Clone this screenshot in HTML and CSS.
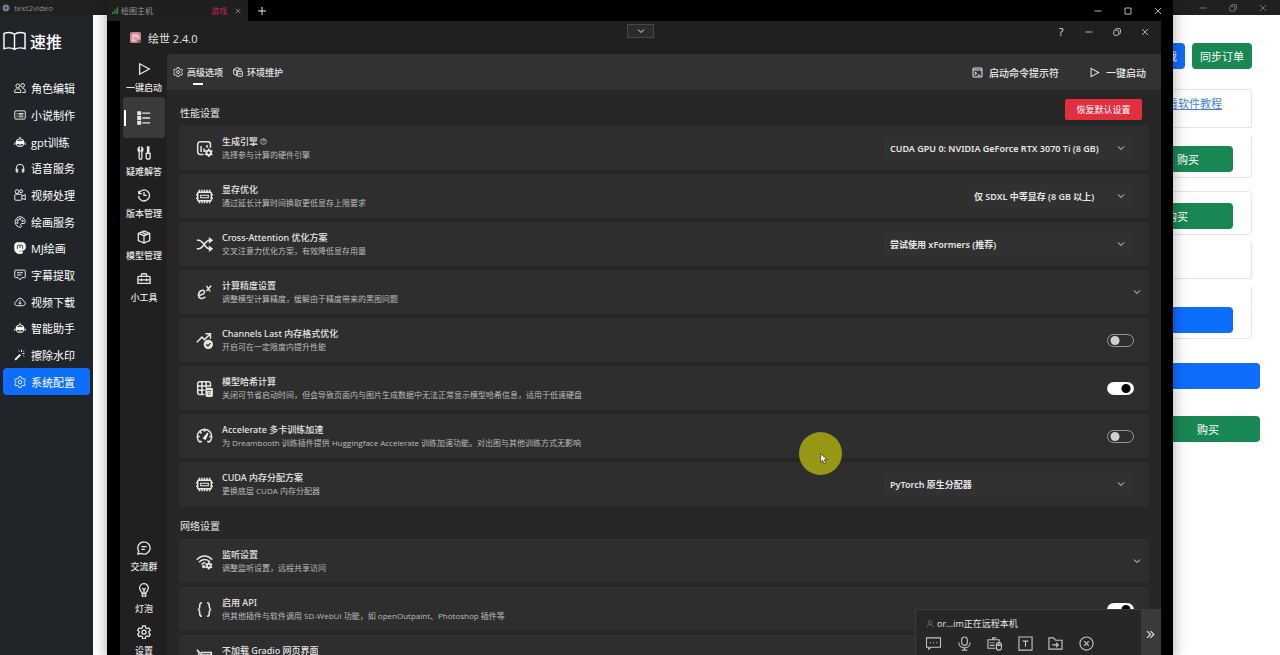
FILE: index.html
```
<!DOCTYPE html>
<html lang="zh-CN">
<head>
    <meta charset="UTF-8">
    <meta name="viewport" content="width=device-width, initial-scale=1.0">
    <title>text2video</title>
    <link rel="stylesheet" href="styles.css">
</head>
<body>
    <!-- Icons used more than once or kept out of the markup -->
    <svg class="sprite" aria-hidden="true">
        <symbol id="i-chevron" viewBox="0 0 16 16"><path d="M2 5l6 6 6-6"/></symbol>
        <symbol id="i-close" viewBox="0 0 16 16"><path d="M2 2l12 12M14 2L2 14"/></symbol>
        <symbol id="i-min" viewBox="0 0 16 16"><path d="M1 8h14"/></symbol>
        <symbol id="i-max" viewBox="0 0 16 16"><path d="M2 2h12v12H2z"/></symbol>
        <symbol id="i-restore" viewBox="0 0 16 16"><rect x="1.500" y="4.500" width="10" height="10" rx="2"/><path d="M5 4V3a2 2 0 0 1 2-2h5a3 3 0 0 1 3 3v5a2 2 0 0 1-2 2h-1"/></symbol>
        <symbol id="i-play" viewBox="0 0 16 16"><path d="M3 2v12l11-6z"/></symbol>
        <symbol id="i-chip" viewBox="0 0 20 20"><rect x="2" y="5" width="16" height="10" rx="1"/><path d="M5.500 8.500h9v3h-9z" stroke-width="1.200"/><path d="M4 2v3M7 2v3M10 2v3M13 2v3M16 2v3M4 15v3M7 15v3M10 15v3M13 15v3M16 15v3M0 8h2M0 12h2M18 8h2M18 12h2"/></symbol>
        <symbol id="i-robot" viewBox="0 0 16 16"><path d="M8 1v3M1 9v3M15 9v3"/><rect x="3" y="4" width="10" height="10" rx="4"/><path d="M3 7h10v3H3z" fill="currentColor"/><path d="M6 12h4"/></symbol>
        <symbol id="i-gear" viewBox="0 0 16 16"><path d="M6.500 1h3l.5 2.200 1.600.9 2.100-.7 1.500 2.600-1.600 1.500v1.500l1.600 1.500-1.500 2.600-2.100-.7-1.600.9-.5 2.200h-3L6 13.300l-1.600-.9-2.100.7L.8 10.500 2.400 9V7.500L.8 6l1.500-2.600 2.100.7L6 3.200z"/><circle cx="8" cy="8.200" r="2.300"/></symbol>
    </svg>

    <div class="desktop">
        <header class="titlebar">
            <svg class="icon" viewBox="0 0 16 16"><ellipse cx="8" cy="8" rx="7" ry="3"/><ellipse cx="8" cy="8" rx="7" ry="3" transform="rotate(60 8 8)"/><ellipse cx="8" cy="8" rx="7" ry="3" transform="rotate(120 8 8)"/></svg>
            <span class="titlebar-name">text2video</span>
            <button class="win-btn" aria-label="最小化"><svg class="icon"><use href="#i-min"/></svg></button>
            <button class="win-btn" aria-label="还原"><svg class="icon"><use href="#i-restore"/></svg></button>
            <button class="win-btn" aria-label="关闭"><svg class="icon"><use href="#i-close"/></svg></button>
        </header>

        <div class="page">
            <aside class="sidebar">
                <div class="brand">
                    <svg class="icon" viewBox="0 0 24 20"><path d="M12 3C9 .8 5 .8 1 2v16c4-1.200 8-1.200 11 .8 3-2 7-2 11-.8V2C19 .8 15 .8 12 3zM12 3v15.500"/></svg>
                    <span>速推</span>
                </div>
                <nav class="menu">
                    <a href="#"><svg class="icon" viewBox="0 0 16 16"><circle cx="5" cy="5" r="2.500"/><circle cx="11.500" cy="4.500" r="2.500"/><path d="M1 14v-2c0-2 1.500-3 4-3s4 1 4 3v2zM11 14h4v-2c0-2-1.500-3.500-4-3.500"/></svg>角色编辑</a>
                    <a href="#"><svg class="icon" viewBox="0 0 16 16"><rect x="1" y="2.500" width="14" height="11" rx="1.500"/><path d="M3.500 6h1M6 6h6.500M3.500 8h1M6 8h6.500M3.500 10.500h1M6 10.500h6.500"/></svg>小说制作</a>
                    <a href="#"><svg class="icon"><use href="#i-robot"/></svg>gpt训练</a>
                    <a href="#"><svg class="icon" viewBox="0 0 16 16"><path d="M3 12V8a5 5 0 0 1 10 0v4"/><path d="M3 9.500h2v4H3zM11 9.500h2v4h-2z"/></svg>语音服务</a>
                    <a href="#"><svg class="icon" viewBox="0 0 16 16"><circle cx="4" cy="3.500" r="2.500"/><circle cx="9.500" cy="3" r="2"/><rect x="1" y="7" width="9.500" height="8" rx="1.500"/><path d="M10.500 9.500L15 7.500v7l-4.500-2"/></svg>视频处理</a>
                    <a href="#"><svg class="icon" viewBox="0 0 16 16"><path d="M8 1a7 7 0 1 0 1 14c1.500-.5.500-2 0-3s0-2 1.500-2H13c2 0 2-2 2-2.500C14.500 3.500 11.500 1 8 1z"/><circle cx="5" cy="5.500" r="1"/><circle cx="8.500" cy="4" r="1"/><circle cx="4.500" cy="9" r="1"/><circle cx="11.500" cy="6.500" r="1"/></svg>绘画服务</a>
                    <a href="#"><svg class="icon" viewBox="0 0 16 16"><path d="M4 1h8c2 0 3 1.500 3 3.500V8c0 2-1.500 3-3.500 3H6c0 1.500 2 2.500 5 1.700V15C5 16 1 14.500 1 9V4.500C1 2.500 2 1 4 1z" fill="currentColor"/><path d="M4.500 9V5.500c0-2 3.500-2 3.500 0V8M8 5.500c0-2 3.500-2 3.500 0V9" stroke="#212529"/></svg>MJ绘画</a>
                    <a href="#"><svg class="icon" viewBox="0 0 16 16"><path d="M2 1.500h12a1 1 0 0 1 1 1v8a1 1 0 0 1-1 1h-3.500L8 14.500l-2.500-3H2a1 1 0 0 1-1-1v-8a1 1 0 0 1 1-1zM4 5h8M4 8h6"/></svg>字幕提取</a>
                    <a href="#"><svg class="icon" viewBox="0 0 16 16"><path d="M4.500 13C2.500 13 1 11.700 1 10c0-1.500 1-2.500 2.500-3C4 4.500 6 3 8 3s4 1.500 4.500 3.500C14 7 15 8 15 9.700S13.500 13 12 13zM8 6v5M6 9l2 2 2-2"/></svg>视频下载</a>
                    <a href="#"><svg class="icon"><use href="#i-robot"/></svg>智能助手</a>
                    <a href="#"><svg class="icon" viewBox="0 0 16 16"><path d="M1.500 14.500l7-7" stroke-width="2.500"/><path d="M10 1v3M14 6h-3M6 2l1.500 1.500M13.500 2L12 3.500M13.500 10L12 8.500"/></svg>擦除水印</a>
                    <a href="#" class="active"><svg class="icon"><use href="#i-gear"/></svg>系统配置</a>
                </nav>
            </aside>

            <main class="orders">
                <div class="orders-top">
                    <button class="btn btn-blue">在线下载</button>
                    <button class="btn btn-green">同步订单</button>
                </div>
                <div class="box box-link"><a href="#">查看软件教程</a></div>
                <div class="box box-open"><button class="btn btn-green">购买</button></div>
                <div class="box box-gap"><button class="btn btn-green btn-wide">购买</button></div>
                <div class="box box-open box-short"></div>
                <div class="box box-open box-tall"><button class="btn btn-blue btn-wide" aria-label="保存"></button></div>
                <button class="btn btn-blue btn-bar" aria-label="提交"></button>
                <button class="btn btn-green btn-last">购买</button>
            </main>
        </div>
    </div>

    <div class="remote">
        <div class="remote-bar">
            <div class="remote-tab">
                <svg class="signal" viewBox="0 0 8 8"><path d="M0 6h1v2H0zM2 4h1v4H2zM4 2h1v6H4zM6 0h1v8H6z"/></svg>
                <span>绘图主机</span>
                <span class="tag">游戏</span>
                <button class="tab-close" aria-label="关闭标签"><svg class="icon"><use href="#i-close"/></svg></button>
            </div>
            <button class="tab-add" aria-label="新建"><svg class="icon" viewBox="0 0 16 16"><path d="M8 0v16M0 8h16"/></svg></button>
            <div class="remote-controls">
                <button class="win-btn" aria-label="最小化"><svg class="icon"><use href="#i-min"/></svg></button>
                <button class="win-btn" aria-label="最大化"><svg class="icon"><use href="#i-max"/></svg></button>
                <button class="win-btn" aria-label="关闭"><svg class="icon"><use href="#i-close"/></svg></button>
            </div>
        </div>

        <div class="app">
            <header class="app-title">
                <svg class="avatar" viewBox="0 0 12 12"><rect width="12" height="12" rx="2" fill="#c9848f"/><path d="M2 10V5c0-4 7-4 8 0v3H8l-2 2z" fill="#e9c3c6"/><path d="M4 6h4v2H4z" fill="#c9848f"/><path d="M9 9h3v3H8z" fill="#7d5b60"/></svg>
                <h1>绘世 2.4.0</h1>
                <div class="app-controls">
                    <button class="help" aria-label="帮助">?</button>
                    <button class="win-btn" aria-label="最小化"><svg class="icon"><use href="#i-min"/></svg></button>
                    <button class="win-btn" aria-label="还原"><svg class="icon"><use href="#i-restore"/></svg></button>
                    <button class="win-btn" aria-label="关闭"><svg class="icon"><use href="#i-close"/></svg></button>
                </div>
            </header>

            <div class="app-body">
                <nav class="rail">
                    <a href="#"><svg class="icon"><use href="#i-play"/></svg>一键启动</a>
                    <a href="#" class="active" aria-label="高级选项"><svg class="icon" viewBox="0 0 16 16"><path d="M1 1h3v3H1zM1 6.500h3v3H1zM1 12h3v3H1z" fill="currentColor"/><path d="M6 2.500h9M6 8h9M6 13.500h9"/></svg></a>
                    <a href="#"><svg class="icon" viewBox="0 0 16 16"><path d="M2.500 1.500v4h3v-4C7 2.500 7.500 5 5.500 7v7c0 1.500-3 1.500-3 0V7C.500 5 1 2.500 2.500 1.500zM12 1h1.500v6H12zM10.500 8.500h4.500V13c0 2.500-4.500 2.500-4.500 0z"/></svg>疑难解答</a>
                    <a href="#"><svg class="icon" viewBox="0 0 16 16"><path d="M2 3v3.500h3.500M2.200 6A6.300 6.300 0 1 1 1.700 9M8 4.500V8.500h3"/></svg>版本管理</a>
                    <a href="#"><svg class="icon" viewBox="0 0 16 16"><path d="M8 1l6.500 2.800v8.400L8 15l-6.500-2.800V3.800zM1.500 3.800L8 6.500l6.500-2.700M8 6.500V15M5 2.500l6.500 2.700"/></svg>模型管理</a>
                    <a href="#"><svg class="icon" viewBox="0 0 16 16"><path d="M5 5V3a1 1 0 0 1 1-1h4a1 1 0 0 1 1 1v2M2 5h12a1 1 0 0 1 1 1v7H1V6a1 1 0 0 1 1-1zM1 9h14M5 7.500v3M11 7.500v3"/></svg>小工具</a>
                    <a href="#" class="rail-end"><svg class="icon" viewBox="0 0 16 16"><path d="M8 1a7 7 0 1 1-3.300 13.200L1 15l.9-3.500A7 7 0 0 1 8 1zM5 6.500h6M5 9.500h4"/></svg>交流群</a>
                    <a href="#"><svg class="icon" viewBox="0 0 16 16"><path d="M6 12C6 10 3 9 3 5.800a5 5 0 0 1 10 0C13 9 10 10 10 12zM6 12v3h4v-3M8 12V7M6 6l2 1.500L10 6"/></svg>灯泡</a>
                    <a href="#"><svg class="icon"><use href="#i-gear"/></svg>设置</a>
                </nav>

                <main class="content">
                    <div class="toolbar">
                        <button class="tab active"><svg class="icon"><use href="#i-gear"/></svg>高级选项</button>
                        <button class="tab"><svg class="icon" viewBox="0 0 16 16"><path d="M1 4l5-3 7 2v3M1 4l5 2v8l-5-3zM6 6l5-2"/><rect x="7" y="7" width="8" height="8" rx="1"/><path d="M9 11h4"/></svg>环境维护</button>
                        <button class="action action-first"><svg class="icon" viewBox="0 0 16 16"><rect x="1.500" y="1.500" width="13" height="13" rx="1.500"/><path d="M1.500 4.500h13M4 7l2.500 2L4 11.500M8 12h4"/></svg>启动命令提示符</button>
                        <button class="action"><svg class="icon"><use href="#i-play"/></svg>一键启动</button>
                    </div>

                    <section class="settings">
                        <div class="section-head">
                            <h2>性能设置</h2>
                            <button class="reset">恢复默认设置</button>
                        </div>

                        <div class="row">
                            <svg class="icon" viewBox="0 0 20 20"><path d="M9 17H5a3 3 0 0 1-3-3V5a3 3 0 0 1 3-3h9a3 3 0 0 1 3 3v4M6 7v7M9.500 10v4M13 6v3"/><path d="M15 10v10M10.700 12.500l8.600 5M10.700 17.500l8.600-5"/><circle cx="15" cy="15" r="3" fill="currentColor"/><circle cx="15" cy="15" r="1.500" fill="#2e2e2e" stroke="none"/></svg>
                            <label for="engine"><b>生成引擎 <svg class="icon hint" viewBox="0 0 16 16"><circle cx="8" cy="8" r="6.500"/><path d="M6 6c0-3 4-3 4 0 0 1.500-2 1.500-2 3M8 11v1"/></svg></b><small>选择参与计算的硬件引擎</small></label>
                            <div class="select"><select id="engine"><option>CUDA GPU 0: NVIDIA GeForce RTX 3070 Ti (8 GB)</option></select><svg class="icon"><use href="#i-chevron"/></svg></div>
                        </div>
                        <div class="row">
                            <svg class="icon"><use href="#i-chip"/></svg>
                            <label for="vram"><b>显存优化</b><small>通过延长计算时间换取更低显存上限要求</small></label>
                            <div class="select select-narrow"><select id="vram"><option>仅 SDXL 中等显存 (8 GB 以上)</option></select><svg class="icon"><use href="#i-chevron"/></svg></div>
                        </div>
                        <div class="row">
                            <svg class="icon" viewBox="0 0 20 20"><path d="M1 5h2c6 0 7 10 13 10h2M1 15h2c6 0 7-10 13-10h2"/><path d="M16 3l3 2-3 2zM16 13l3 2-3 2z" fill="currentColor"/></svg>
                            <label for="attention"><b>Cross-Attention 优化方案</b><small>交叉注意力优化方案，有效降低显存用量</small></label>
                            <div class="select"><select id="attention"><option>尝试使用 xFormers (推荐)</option></select><svg class="icon"><use href="#i-chevron"/></svg></div>
                        </div>
                        <button class="row row-expand">
                            <svg class="icon" viewBox="0 0 20 20"><path d="M2 13c4 0 8-1 8-4 0-3-7-2-7 4 0 5 5 5 8 2M12 3c2-1 3 6 5 5M18 2c-2 1-4 6-6 6"/></svg>
                            <span class="text"><b>计算精度设置</b><small>调整模型计算精度，缓解由于精度带来的黑图问题</small></span>
                            <svg class="icon arrow"><use href="#i-chevron"/></svg>
                        </button>
                        <div class="row">
                            <svg class="icon" viewBox="0 0 20 20"><path d="M1 12l6-6 3 3 6-6M11 2h6v6"/><circle cx="14.500" cy="14.500" r="5.500" fill="currentColor" stroke="none"/><path d="M12 14.500l2 2 3-3.500" stroke="#2e2e2e" stroke-width="1.500"/></svg>
                            <label for="channels"><b>Channels Last 内存格式优化</b><small>开启可在一定限度内提升性能</small></label>
                            <input type="checkbox" class="switch" id="channels">
                        </div>
                        <div class="row">
                            <svg class="icon" viewBox="0 0 20 20"><path d="M10 17H4a2 2 0 0 1-2-2V4a2 2 0 0 1 2-2h11a2 2 0 0 1 2 2v4M2 7h15M2 12h8M7 2v15M12 2v7"/><rect x="12" y="10" width="7" height="9" rx="1" fill="currentColor"/><path d="M13 12.500h5M14 15h1M16 15h1M14 17h1M16 17h1" stroke="#2e2e2e" stroke-width="1"/></svg>
                            <label for="hash"><b>模型哈希计算</b><small>关闭可节省启动时间，但会导致页面内与图片生成数据中无法正常显示模型哈希信息，适用于低速硬盘</small></label>
                            <input type="checkbox" class="switch" id="hash" checked>
                        </div>
                        <div class="row">
                            <svg class="icon" viewBox="0 0 20 20"><path d="M5 17a8.500 8.500 0 1 1 10 0M2 10h2.500M5 4.500l1.500 2M10 2v2.500M18 10h-2.500M5 17l1.500-2M15 17l-1.500-2"/><path d="M9 12l5-6-3 7z" fill="currentColor"/></svg>
                            <label for="accelerate"><b>Accelerate 多卡训练加速</b><small>为 Dreambooth 训练插件提供 Huggingface Accelerate 训练加速功能。对出图与其他训练方式无影响</small></label>
                            <input type="checkbox" class="switch" id="accelerate">
                        </div>
                        <div class="row">
                            <svg class="icon"><use href="#i-chip"/></svg>
                            <label for="alloc"><b>CUDA 内存分配方案</b><small>更换底层 CUDA 内存分配器</small></label>
                            <div class="select"><select id="alloc"><option>PyTorch 原生分配器</option></select><svg class="icon"><use href="#i-chevron"/></svg></div>
                        </div>

                        <div class="section-head section-next">
                            <h2>网络设置</h2>
                        </div>
                        <button class="row row-expand">
                            <svg class="icon" viewBox="0 0 20 20"><path d="M1 8c5-6 13-6 18 0M3.500 11c4-4.500 9-4.500 13-.5M6.500 13.500c2-2 3-2.500 4.500-2"/><circle cx="9" cy="16" r="1" fill="currentColor"/><path d="M15 10.500v9M11 12.700l8 4.600M11 17.300l8-4.600"/><circle cx="15" cy="15" r="2.500" fill="currentColor"/><circle cx="15" cy="15" r="1.300" fill="#2e2e2e" stroke="none"/></svg>
                            <span class="text"><b>监听设置</b><small>调整监听设置，远程共享访问</small></span>
                            <svg class="icon arrow"><use href="#i-chevron"/></svg>
                        </button>
                        <div class="row">
                            <svg class="icon" viewBox="0 0 20 20"><path d="M7 2C3 2 5 6 4 8.500 3.500 9.500 3 10 2 10c1 0 1.500.5 2 1.500C5 14 3 18 7 18M13 2c4 0 2 4 3 6.500.5 1 1 1.500 2 1.500-1 0-1.500.5-2 1.500-1 2.500 1 6.500-3 6.500"/></svg>
                            <label for="api"><b>启用 API</b><small>供其他插件与软件调用 SD-WebUI 功能，如 openOutpaint、Photoshop 插件等</small></label>
                            <input type="checkbox" class="switch" id="api" checked>
                        </div>
                        <div class="row">
                            <svg class="icon" viewBox="0 0 20 20"><path d="M1 1l17 17M6 4h12v12M3 5v11h12M8 7h10"/></svg>
                            <label for="gradio"><b>不加载 Gradio 网页界面</b><small></small></label>
                            <input type="checkbox" class="switch" id="gradio">
                        </div>
                    </section>
                </main>
            </div>
        </div>

        <button class="handle" aria-label="展开工具栏"><svg class="icon"><use href="#i-chevron"/></svg></button>

        <div class="session">
            <div class="session-main">
                <div class="session-user"><svg class="icon" viewBox="0 0 16 16"><circle cx="8" cy="5" r="3.500"/><path d="M2 15c0-8 12-8 12 0"/></svg>or...im正在远程本机</div>
                <div class="session-tools">
                    <button aria-label="聊天"><svg class="icon" viewBox="0 0 16 16"><path d="M.5 2h15v10H5l-2 2v-2H.5zM4 7h1M7.500 7h1M11 7h1"/></svg></button>
                    <button aria-label="语音"><svg class="icon" viewBox="0 0 16 16"><rect x="5" y="1" width="6" height="9" rx="3"/><path d="M2 7c0 7.500 12 7.500 12 0M8 12.500V15M5 15h6"/></svg></button>
                    <button aria-label="键鼠"><svg class="icon" viewBox="0 0 16 16"><path d="M9 13H1V4h12v2M6 4V2h4M3 7h1M5 7h1M7 7h1M3 10h5"/><rect x="10" y="7" width="5.500" height="8" rx="2.500"/><path d="M10 10h5M12.700 7v3"/></svg></button>
                    <button aria-label="文本"><svg class="icon" viewBox="0 0 16 16"><path d="M1 1h14v14H1zM5 5.500h6M8 5.500V11.500"/></svg></button>
                    <button aria-label="传输文件"><svg class="icon" viewBox="0 0 16 16"><path d="M1 2h5l2 2.500h7V14H1zM4.500 9.500H11M8.500 7l2.500 2.500L8.500 12"/></svg></button>
                    <button aria-label="断开"><svg class="icon" viewBox="0 0 16 16"><circle cx="8" cy="8" r="7"/><path d="M5.500 5.500l5 5M10.500 5.500l-5 5"/></svg></button>
                </div>
            </div>
            <button class="session-fold" aria-label="收起"><svg class="icon" viewBox="0 0 16 16"><path d="M2 2l6 6-6 6M8 2l6 6-6 6"/></svg></button>
        </div>
    </div>

    <div class="pointer">
        <svg viewBox="0 0 12 18"><path d="M1 1v13l3-3 2 5 2.500-1-2-5H11z"/></svg>
    </div>
</body>
</html>
```
FILE: styles.css
```
* {
    box-sizing: border-box;
}
body {
    margin: 0;
    height: 100vh;
    overflow: hidden;
    position: relative;
    font-family: "Open Sans", "Noto Sans CJK SC", sans-serif;
    font-size: 11px;
    background-color: #fff;
}
button, select {
    font-family: inherit;
    color: inherit;
    background: none;
    border: none;
    margin: 0;
    padding: 0;
}
a {
    color: inherit;
    text-decoration: none;
}
.sprite {
    display: none;
}
.icon {
    width: 12px;
    height: 12px;
    flex: none;
    fill: none;
    stroke: currentColor;
    stroke-width: 1.5;
}
.win-btn {
    display: flex;
    align-items: center;
    justify-content: center;
    width: 30px;
    height: 14px;
}
.win-btn .icon {
    width: 8px;
    height: 8px;
}

/* Back window */
.desktop {
    height: 100%;
    display: flex;
    flex-direction: column;
}
.titlebar {
    height: 15px;
    flex: none;
    display: flex;
    align-items: center;
    padding: 0 2px;
    background-color: #202020;
    color: #8c8c8c;
    font-size: 8px;
}
.titlebar .icon {
    width: 8px;
    height: 8px;
}
.titlebar > .icon {
    color: #8fa3b0;
}
.titlebar-name {
    flex: 1;
    padding-left: 4px;
}
.page {
    flex: 1;
    display: flex;
}
.sidebar {
    width: 93px;
    padding: 13px 3px 0;
    background-color: #212529;
    color: #fff;
}
.brand {
    display: flex;
    align-items: center;
    gap: 4px;
    height: 26px;
    font-size: 16px;
    font-weight: 500;
}
.brand .icon {
    width: 23px;
    height: 20px;
}
.menu {
    display: flex;
    flex-direction: column;
    height: 320px;
    margin-top: 21px;
}
.menu a {
    flex: 1;
    display: flex;
    align-items: center;
    gap: 5px;
    padding-left: 11px;
    border-radius: 4px;
}
.menu a.active {
    background-color: #0d6efd;
}
.menu .icon {
    stroke-width: 1.2;
}
.orders {
    flex: 1;
    display: flex;
    flex-direction: column;
    align-items: flex-end;
    padding: 28px 28px 0;
}
.orders-top {
    display: flex;
    gap: 7px;
    margin-bottom: 20px;
}
.btn {
    height: 26px;
    min-width: 60px;
    padding: 0 8px;
    border-radius: 4px;
    color: #fff;
    font-size: 11px;
}
.btn-blue {
    background-color: #0d6efd;
}
.btn-green {
    background-color: #198754;
}
.box {
    width: 50%;
    height: 44px;
    padding: 6px 18px 0 0;
    display: flex;
    justify-content: flex-end;
    align-items: center;
    border: 1px solid #e3e4e6;
    border-radius: 4px;
}
.box .btn {
    width: 90px;
}
.box .btn-wide {
    width: 112px;
}
.box-link {
    height: 39px;
    padding: 5px 29px 0;
    align-items: flex-start;
    border-radius: 4px 4px 0 0;
}
.box-link a {
    color: #4a7fe0;
    text-decoration: underline;
}
.box-open {
    margin-top: 6px;
    border-top: none;
}
.box-gap {
    margin-top: 13px;
}
.box-short {
    height: 38px;
}
.box-tall {
    height: 54px;
    padding-top: 16px;
}
.btn-bar, .btn-last {
    width: 104px;
    margin: 24px -8px 0 0;
}
.btn-last {
    margin-top: 27px;
}

/* Remote desktop window, runs a little past the lower screen edge */
.remote {
    position: absolute;
    top: 0;
    left: 107px;
    right: 107px;
    bottom: -4px;
    display: flex;
    flex-direction: column;
    background-color: #000;
    color: #e6e6e6;
    box-shadow: 0 0 14px rgba(0, 0, 0, 0.35);
}
.remote-bar {
    height: 21px;
    flex: none;
    display: flex;
    align-items: center;
}
.remote-tab {
    width: 141px;
    height: 21px;
    display: flex;
    align-items: center;
    gap: 2px;
    padding: 0 5px;
    background-color: #1f1f1f;
    color: #9a9a9a;
    font-size: 8px;
}
.signal {
    width: 7px;
    height: 7px;
    fill: #2fb344;
}
.tag {
    margin-left: auto;
    margin-right: 4px;
    color: #c4284c;
}
.tab-close {
    display: flex;
    padding: 2px;
}
.tab-close .icon {
    width: 6px;
    height: 6px;
    stroke-width: 2;
}
.tab-add {
    display: flex;
    margin-left: 10px;
}
.tab-add .icon {
    width: 8px;
    height: 8px;
    stroke-width: 2;
}
.remote-controls {
    display: flex;
    margin-left: auto;
}
.app {
    flex: 1;
    min-height: 0;
    display: flex;
    flex-direction: column;
    margin: 0 12px 0 13px;
    background-color: #202020;
}
.app-title {
    height: 33px;
    flex: none;
    display: flex;
    align-items: center;
    gap: 7px;
    padding-left: 10px;
}
.avatar {
    width: 11px;
    height: 11px;
}
h1, h2 {
    margin: 0;
    font-weight: 400;
}
h1 {
    font-size: 11px;
}
h2 {
    font-size: 10px;
}
.app-controls {
    display: flex;
    align-self: flex-start;
    margin-left: auto;
    padding: 4px 2px 0 0;
}
.app-controls .win-btn {
    width: 28px;
}
.help {
    width: 28px;
    height: 14px;
    font-size: 11px;
    line-height: 14px;
}
.app-body {
    flex: 1;
    min-height: 0;
    display: flex;
}
.rail {
    width: 47px;
    flex: none;
    display: flex;
    flex-direction: column;
    gap: 1px;
    padding: 1px 2px 0 3px;
}
.rail a {
    height: 41px;
    flex: none;
    display: flex;
    flex-direction: column;
    align-items: center;
    gap: 6px;
    padding-top: 7px;
    border-radius: 3px;
    font-size: 9px;
    font-weight: 500;
    line-height: 12px;
    white-space: nowrap;
}
.rail .icon {
    width: 14px;
    height: 14px;
}
.rail a.active {
    justify-content: center;
    padding: 0;
    background: linear-gradient(#fff, #fff) 1px 50% / 2px 16px no-repeat #3a3a3a;
}
.rail .rail-end {
    margin-top: auto;
}
.content {
    flex: 1;
    min-width: 0;
    display: flex;
    flex-direction: column;
    background-color: #272727;
    border-top-left-radius: 4px;
    overflow: hidden;
}
.toolbar {
    height: 36px;
    flex: none;
    display: flex;
    align-items: center;
    gap: 10px;
    padding: 0 15px 0 6px;
    background-color: #323232;
}
.tab, .action {
    height: 36px;
    display: flex;
    align-items: center;
    gap: 4px;
    font-size: 9px;
    font-weight: 500;
}
.tab.active {
    background: linear-gradient(#fff, #fff) 20px 29px / 10px 2px no-repeat;
}
.tab .icon {
    width: 10px;
    height: 10px;
}
.action {
    gap: 6px;
    font-size: 10px;
}
.action-first {
    margin-left: auto;
    margin-right: 20px;
}
.action .icon {
    width: 11px;
    height: 11px;
}
.settings {
    display: flex;
    flex-direction: column;
    gap: 4px;
    padding: 9px 12px 0;
}
.section-head {
    flex: none;
    height: 23px;
    display: flex;
    justify-content: space-between;
    padding: 0 7px 0 1px;
}
.section-head h2 {
    line-height: 28px;
}
.section-next {
    height: 25px;
    padding-top: 2px;
}
.reset {
    width: 77px;
    height: 21px;
    border-radius: 2px;
    background-color: #e22f40;
    color: #fff;
    font-size: 9px;
}
.row {
    flex: none;
    width: 100%;
    height: 44px;
    display: flex;
    align-items: center;
    gap: 9px;
    padding: 0 15px 0 17px;
    background-color: #2e2e2e;
    border-radius: 2px;
    text-align: left;
}
.row > .icon {
    width: 17px;
    height: 17px;
    stroke-width: 1.8;
}
.row label, .row .text {
    flex: 1;
    white-space: nowrap;
}
.row b, .row small {
    display: block;
}
.row b {
    font-family: "Noto Sans", "Noto Sans CJK SC", sans-serif;
    font-size: 9px;
    line-height: 14px;
    font-weight: 500;
}
.row small {
    min-height: 12px;
    font-size: 8px;
    line-height: 12px;
    color: #bdbdbd;
}
.row .hint {
    width: 7px;
    height: 7px;
}
.row-expand {
    padding-right: 8px;
}
.row .arrow, .select .icon {
    width: 8px;
    height: 8px;
    stroke-width: 2;
}
.select {
    width: 250px;
    display: grid;
    align-items: center;
}
.select-narrow {
    width: 166px;
}
.select select, .select .icon {
    grid-area: 1 / 1;
}
.select select {
    appearance: none;
    height: 24px;
    padding-left: 6px;
    border-radius: 2px;
    background-color: #313131;
    font-family: "Noto Sans", "Noto Sans CJK SC", sans-serif;
    font-size: 9px;
    font-weight: 600;
}
.select .icon {
    justify-self: end;
    margin-right: 9px;
    pointer-events: none;
}
.switch {
    appearance: none;
    width: 27px;
    height: 13px;
    margin: 0;
    border: 1px solid #9a9a9a;
    border-radius: 7px;
    background: radial-gradient(circle at 7px 50%, #d0d0d0 4px, transparent 5px);
}
.switch:checked {
    border-color: #fff;
    background: radial-gradient(circle at 18px 50%, #000 4px, #fff 5px);
}

/* Overlays of the remote session */
.handle {
    position: absolute;
    top: 24px;
    left: 50%;
    width: 27px;
    height: 14px;
    margin-left: -13px;
    display: flex;
    align-items: center;
    justify-content: center;
    border: 1px solid #484848;
    background-color: #2b2b2b;
}
.handle .icon {
    width: 8px;
    height: 8px;
    stroke-width: 2;
}
.session {
    position: absolute;
    right: 12px;
    bottom: 0;
    width: 246px;
    height: 50px;
    display: flex;
    background-color: #272727;
    border: 1px solid #3b3b3b;
}
.session-main {
    flex: 1;
    padding: 7px 10px;
}
.session-user {
    display: flex;
    align-items: center;
    gap: 3px;
    height: 13px;
    font-size: 9px;
}
.session-user .icon {
    width: 8px;
    height: 8px;
    color: #777;
}
.session-tools {
    display: flex;
    justify-content: space-between;
    width: 168px;
    margin-top: 6px;
    color: #c4c4c4;
}
.session-tools button, .session-fold {
    display: flex;
    align-items: center;
    justify-content: center;
}
.session-tools .icon {
    width: 15px;
    height: 15px;
    stroke-width: 1.2;
}
.session-fold {
    width: 19px;
    background-color: #3a3a3a;
}
.session-fold .icon {
    width: 9px;
    height: 9px;
    stroke-width: 2;
}
.pointer {
    position: absolute;
    top: 432px;
    left: 799px;
    width: 43px;
    height: 43px;
    display: flex;
    padding: 21px 0 0 21px;
    border-radius: 50%;
    background-color: #979716;
}
.pointer svg {
    width: 8px;
    height: 12px;
    fill: #fff;
    stroke: #222;
}
```
